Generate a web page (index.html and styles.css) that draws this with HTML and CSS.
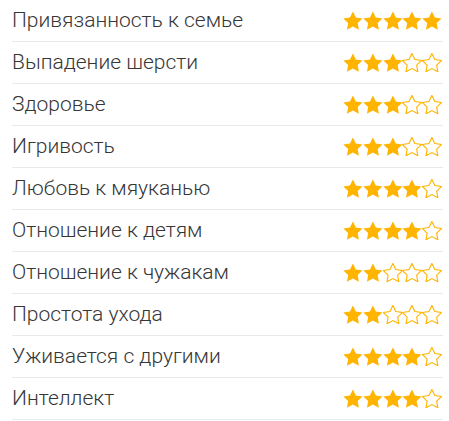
FILE: index.html
```html
<!DOCTYPE html>
<html lang="ru">
<head>
<meta charset="utf-8">
<link rel="stylesheet" href="styles.css">
</head>
<body>
<svg width="0" height="0" class="defs">
  <defs>
    <path id="star" d="M12 2.6l2.9 6.1 6.6.9-4.8 4.6 1.2 6.6L12 17.6l-5.9 3.2 1.2-6.6-4.8-4.6 6.6-.9z"/>
  </defs>
</svg>
<ul class="traits">
  <li class="row"><span class="label">Привязанность к семье</span><span class="stars" data-n="5"></span></li>
  <li class="row"><span class="label">Выпадение шерсти</span><span class="stars" data-n="3"></span></li>
  <li class="row"><span class="label">Здоровье</span><span class="stars" data-n="3"></span></li>
  <li class="row"><span class="label">Игривость</span><span class="stars" data-n="3"></span></li>
  <li class="row"><span class="label">Любовь к мяуканью</span><span class="stars" data-n="4"></span></li>
  <li class="row"><span class="label">Отношение к детям</span><span class="stars" data-n="4"></span></li>
  <li class="row"><span class="label">Отношение к чужакам</span><span class="stars" data-n="2"></span></li>
  <li class="row"><span class="label">Простота ухода</span><span class="stars" data-n="2"></span></li>
  <li class="row"><span class="label">Уживается с другими</span><span class="stars" data-n="4"></span></li>
  <li class="row"><span class="label">Интеллект</span><span class="stars" data-n="4"></span></li>
</ul>
<script>
document.querySelectorAll('.stars').forEach(function (el) {
  var n = +el.dataset.n, html = '';
  for (var i = 0; i < 5; i++) {
    html += '<svg class="star ' + (i < n ? 'on' : 'off') + '" viewBox="2.2 2.2 19.6 19.2"><use href="#star"/></svg>';
  }
  el.innerHTML = html;
});
</script>
</body>
</html>
```

FILE: styles.css
```css
html, body {
  margin: 0;
  padding: 0;
  background: #fff;
}
.defs {
  position: absolute;
  width: 0;
  height: 0;
}
.traits {
  list-style: none;
  margin: 0;
  padding: 0 6px 0 12px;
  width: 431px;
  font-family: Roboto, "Noto Sans", sans-serif;
  font-weight: 300;
  font-size: 21px;
  color: #363636;
}
.row {
  display: flex;
  align-items: center;
  justify-content: space-between;
  height: 41px;
  border-bottom: 1px solid #e9e9e9;
}
.label {
  padding-bottom: 1px;
}
.stars {
  display: flex;
  margin-right: 1px;
}
.star {
  width: 19.8px;
  height: 19.4px;
  display: block;
}
.star.on {
  fill: #ffb400;
}
.star.off {
  fill: none;
  stroke: #ffb400;
  stroke-width: 1.1;
}
```
